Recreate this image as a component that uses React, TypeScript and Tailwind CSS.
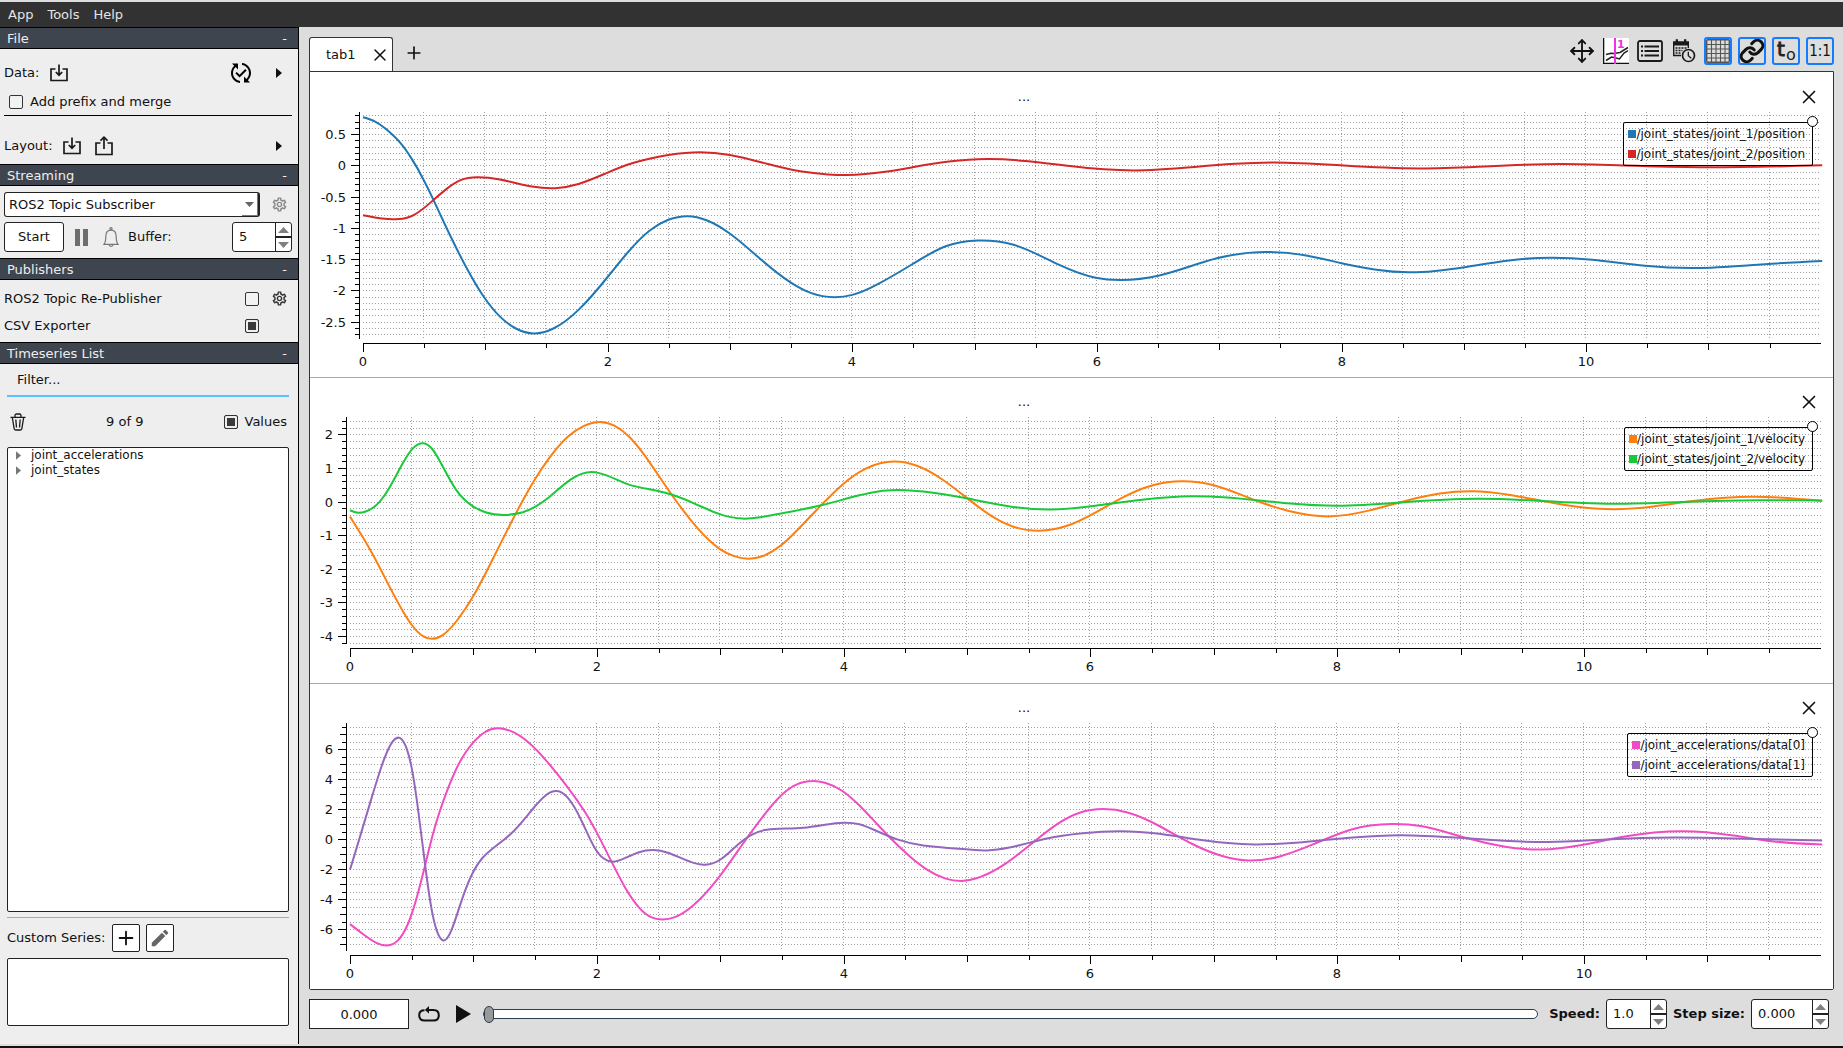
import { useEffect, useId, useRef, useState } from "react";
import type { ReactNode } from "react";
import { Link, Move, Plus, X } from "lucide-react";
import { MdEdit, MdOutlineSettings, MdPublishedWithChanges } from "react-icons/md";

type Point = [number, number];

interface Series {
  name: string;
  color: string;
  points: Point[];
}

interface PlotConfig {
  label: string;
  left: number;
  min: number;
  max: number;
  major: number;
  minor: number;
  medium?: number;
  series: Series[];
}

const END_TIME = 11.92;

const position1: Point[] = [
  [0, 0.78], [0.1, 0.71], [0.2, 0.57], [0.3, 0.38], [0.4, 0.11], [0.49, -0.2], [0.573, -0.53], [0.695, -1.04],
  [0.856, -1.665], [0.99, -2.1], [1.12, -2.41], [1.25, -2.6], [1.397, -2.68], [1.557, -2.6], [1.762, -2.303],
  [2, -1.777], [2.157, -1.4], [2.347, -1.027], [2.496, -0.862], [2.648, -0.803], [2.814, -0.872], [2.998, -1.08],
  [3.253, -1.495], [3.495, -1.862], [3.66, -2.03], [3.857, -2.1], [4.0, -2.063], [4.21, -1.89], [4.493, -1.569],
  [4.764, -1.285], [5.03, -1.193], [5.312, -1.257], [5.688, -1.578], [5.99, -1.788], [6.2, -1.825], [6.51, -1.752],
  [6.98, -1.477], [7.373, -1.376], [7.71, -1.431], [8, -1.555], [8.285, -1.66], [8.55, -1.701], [9.02, -1.614],
  [9.37, -1.51], [9.72, -1.468], [10.05, -1.5], [10.48, -1.596], [10.9, -1.633], [11.4, -1.58], [11.93, -1.518],
];

const position2: Point[] = [
  [0, -0.79], [0.155, -0.841], [0.29, -0.85], [0.418, -0.782], [0.573, -0.55], [0.681, -0.371], [0.798, -0.228],
  [0.944, -0.181], [1.119, -0.218], [1.382, -0.33], [1.572, -0.356], [1.762, -0.288], [2, -0.106], [2.2, 0.043],
  [2.496, 0.176], [2.756, 0.22], [3, 0.176], [3.31, 0.032], [3.574, -0.085], [3.8, -0.135], [3.954, -0.144],
  [4.27, -0.094], [4.493, -0.02], [4.79, 0.07], [5.1, 0.112], [5.416, 0.08], [5.78, -0.003], [6.3, -0.071],
  [6.82, -0.012], [7.13, 0.035], [7.45, 0.057], [8.02, 0.006], [8.65, -0.039], [9.17, -0.007], [9.8, 0.029],
  [10.32, 0.006], [10.94, -0.021], [11.93, 0.011],
];

const velocity1: Point[] = [
  [0, -0.43], [0.084, -0.925], [0.185, -1.558], [0.316, -2.487], [0.432, -3.27], [0.504, -3.674], [0.591, -3.99],
  [0.664, -4.07], [0.751, -3.961], [0.867, -3.526], [0.997, -2.814], [1.127, -1.914], [1.345, -0.33],
  [1.493, 0.648], [1.62, 1.34], [1.765, 1.944], [1.896, 2.27], [2.026, 2.389], [2.142, 2.28], [2.258, 1.963],
  [2.388, 1.39], [2.493, 0.83], [2.62, 0.153], [2.809, -0.747], [2.994, -1.39], [3.113, -1.607], [3.229, -1.686],
  [3.359, -1.588], [3.496, -1.28], [3.647, -0.747], [3.821, -0.084], [3.992, 0.529], [4.18, 0.998], [4.413, 1.211],
  [4.594, 1.083], [4.8, 0.675], [5.008, 0.095], [5.214, -0.45], [5.395, -0.756], [5.587, -0.85], [5.81, -0.705],
  [6.04, -0.313], [6.248, 0.112], [6.506, 0.501], [6.739, 0.62], [7, 0.501], [7.333, 0.058], [7.592, -0.248],
  [7.928, -0.424], [8.264, -0.245], [8.574, 0.058], [8.832, 0.256], [9.09, 0.325], [9.4, 0.215], [9.71, 0],
  [9.995, -0.159], [10.253, -0.211], [10.563, -0.126], [10.9, 0.04], [11.364, 0.162], [11.93, 0.036],
];

const velocity2: Point[] = [
  [0, -0.242], [0.055, -0.312], [0.127, -0.28], [0.243, 0.025], [0.316, 0.41], [0.431, 1.18], [0.504, 1.578],
  [0.582, 1.756], [0.663, 1.597], [0.75, 1.07], [0.865, 0.34], [0.996, -0.124], [1.097, -0.302], [1.256, -0.381],
  [1.4, -0.302], [1.502, -0.134], [1.618, 0.163], [1.79, 0.678], [1.92, 0.885], [2.02, 0.865], [2.255, 0.529],
  [2.486, 0.341], [2.617, 0.213], [2.805, -0.064], [2.99, -0.351], [3.18, -0.49], [3.326, -0.45], [3.494, -0.341],
  [3.818, -0.094], [4.128, 0.203], [4.28, 0.32], [4.44, 0.36], [4.646, 0.317], [5.008, 0.104], [5.37, -0.143],
  [5.68, -0.22], [6.04, -0.109], [6.455, 0.085], [6.817, 0.172], [7.075, 0.147], [7.592, -0.034], [8.005, -0.109],
  [8.52, -0.007], [9.142, 0.102], [9.66, 0.034], [10.23, -0.049], [10.85, 0.01], [11.416, 0.053], [11.93, 0.044],
];

const acceleration0: Point[] = [
  [0, -5.61], [0.113, -6.32], [0.214, -6.856], [0.301, -7.033], [0.388, -6.7], [0.46, -5.77], [0.518, -4.478],
  [0.605, -1.8], [0.692, 0.967], [0.779, 3.1], [0.88, 5.03], [0.996, 6.456], [1.097, 7.2], [1.193, 7.433],
  [1.3, 7.256], [1.445, 6.504], [1.59, 5.278], [1.764, 3.5], [1.909, 1.786], [2.025, 0.083], [2.118, -1.433],
  [2.228, -3.151], [2.344, -4.527], [2.445, -5.167], [2.532, -5.3], [2.633, -5.144], [2.778, -4.389],
  [2.993, -2.451], [3.184, -0.256], [3.358, 1.681], [3.5, 3.01], [3.617, 3.68], [3.748, 3.922], [3.849, 3.806],
  [3.99, 3.256], [4.13, 2.267], [4.284, 0.941], [4.49, -0.764], [4.672, -1.967], [4.827, -2.58], [4.956, -2.733],
  [5.11, -2.465], [5.318, -1.546], [5.525, -0.245], [5.731, 1.045], [5.912, 1.8], [6.103, 2.05], [6.3, 1.822],
  [6.558, 0.923], [6.817, -0.245], [7.075, -1.087], [7.28, -1.374], [7.54, -1.087], [7.798, -0.32], [8.108, 0.674],
  [8.444, 1.056], [8.677, 0.921], [9.039, 0.138], [9.349, -0.436], [9.66, -0.647], [9.97, -0.36], [10.33, 0.214],
  [10.8, 0.578], [11.21, 0.29], [11.52, -0.092], [11.93, -0.302],
];

const acceleration1: Point[] = [
  [0, -1.99], [0.07, -0.1], [0.171, 2.678], [0.258, 4.95], [0.33, 6.344], [0.403, 6.789], [0.46, 6.056],
  [0.498, 4.856], [0.547, 2.31], [0.611, -1.81], [0.663, -4.7], [0.707, -6.122], [0.756, -6.7], [0.823, -5.99],
  [0.895, -4.278], [0.982, -2.411], [1.07, -1.24], [1.185, -0.39], [1.33, 0.611], [1.474, 1.989], [1.59, 2.986],
  [1.677, 3.25], [1.764, 2.806], [1.88, 1.211], [1.98, -0.489], [2.053, -1.228], [2.126, -1.456], [2.228, -1.22],
  [2.343, -0.82], [2.459, -0.678], [2.575, -0.856], [2.75, -1.438], [2.878, -1.656], [3.008, -1.278],
  [3.124, -0.453], [3.254, 0.339], [3.358, 0.648], [3.473, 0.744], [3.676, 0.809], [3.85, 1.01], [4, 1.134],
  [4.128, 1.036], [4.24, 0.69], [4.44, 0.02], [4.646, -0.38], [4.904, -0.57], [5.163, -0.704], [5.344, -0.513],
  [5.628, 0.06], [5.938, 0.444], [6.248, 0.577], [6.558, 0.406], [6.868, 0.023], [7.333, -0.302], [7.695, -0.168],
  [8.1, 0.138], [8.52, 0.309], [8.987, 0.138], [9.35, -0.054], [9.71, -0.149], [10.176, 0.023], [10.74, 0.156],
  [11.21, 0.1], [11.93, -0.034],
];

const plots: PlotConfig[] = [
  {
    label: "Joint positions",
    left: 53,
    min: -2.76,
    max: 0.855,
    major: 0.5,
    minor: 0.1,
    series: [
      { name: "/joint_states/joint_1/position", color: "#1f77b4", points: position1 },
      { name: "/joint_states/joint_2/position", color: "#d62728", points: position2 },
    ],
  },
  {
    label: "Joint velocities",
    left: 40,
    min: -4.21,
    max: 2.52,
    major: 1,
    minor: 0.2,
    series: [
      { name: "/joint_states/joint_1/velocity", color: "#ff7f0e", points: velocity1 },
      { name: "/joint_states/joint_2/velocity", color: "#1ac938", points: velocity2 },
    ],
  },
  {
    label: "Joint accelerations",
    left: 40,
    min: -7.37,
    max: 7.75,
    major: 2,
    minor: 0.5,
    medium: 1,
    series: [
      { name: "/joint_accelerations/data[0]", color: "#f14cc1", points: acceleration0 },
      { name: "/joint_accelerations/data[1]", color: "#9467bd", points: acceleration1 },
    ],
  },
];

// Slopes of the natural cubic spline through the points (tridiagonal solve).
function splineSlopes(pts: Point[]): number[] {
  const n = pts.length;
  const h = pts.slice(1).map((p, i) => p[0] - pts[i][0]);
  const d = pts.slice(1).map((p, i) => (p[1] - pts[i][1]) / h[i]);
  const upper: number[] = [0.5];
  const rhs: number[] = [1.5 * d[0]];
  for (let i = 1; i < n; i++) {
    const last = i === n - 1;
    const a = last ? 1 : h[i];
    const b = last ? 2 : 2 * (h[i - 1] + h[i]);
    const c = last ? 0 : h[i - 1];
    const r = last ? 3 * d[i - 1] : 3 * (h[i] * d[i - 1] + h[i - 1] * d[i]);
    const m = b - a * upper[i - 1];
    upper.push(c / m);
    rhs.push((r - a * rhs[i - 1]) / m);
  }
  const slopes = rhs.slice();
  for (let i = n - 2; i >= 0; i--) slopes[i] = rhs[i] - upper[i] * slopes[i + 1];
  return slopes;
}

function smoothPath(pts: Point[]): string {
  const slopes = splineSlopes(pts);
  let d = `M${pts[0][0].toFixed(1)} ${pts[0][1].toFixed(1)}`;
  for (let i = 1; i < pts.length; i++) {
    const [x0, y0] = pts[i - 1];
    const [x1, y1] = pts[i];
    const h = (x1 - x0) / 3;
    const c = [x0 + h, y0 + slopes[i - 1] * h, x1 - h, y1 - slopes[i] * h, x1, y1];
    d += `C${c.map((n) => n.toFixed(1)).join(" ")}`;
  }
  return d;
}

function isMultiple(value: number, step: number): boolean {
  return Math.abs(value / step - Math.round(value / step)) < 1e-6;
}

function Plot({ config }: { config: PlotConfig }) {
  const host = useRef<HTMLDivElement>(null);
  const [size, setSize] = useState({ w: 1523, h: 305 });

  useEffect(() => {
    const el = host.current;
    if (!el) return;
    const measure = () => setSize({ w: el.clientWidth, h: el.clientHeight });
    measure();
    const observer = new ResizeObserver(measure);
    observer.observe(el);
    return () => observer.disconnect();
  }, []);

  const { left, min, max, major, minor, medium, series } = config;
  const right = size.w - 12;
  const top = 39;
  const bottom = size.h - 39;
  const axisY = size.h - 34;
  const sx = (t: number) => left + (t / END_TIME) * (right - left);
  const sy = (v: number) => top + ((max - v) / (max - min)) * (bottom - top);

  const rows: number[] = [];
  for (let k = Math.ceil(min / minor); k * minor <= max; k++) rows.push(k * minor);
  const columns: number[] = [];
  for (let t = 0; t <= END_TIME; t += 0.5) columns.push(t);

  return (
    <section
      aria-label={config.label}
      className="relative min-h-0 overflow-hidden border-b border-[#aaa] bg-white last:border-b-0"
    >
      <div ref={host} className="h-full">
        <svg width={size.w} height={size.h} className="block" role="img" aria-label={`${config.label} chart`}>
          <g stroke="#a0a0a4" strokeDasharray="1 2" shapeRendering="crispEdges">
            {rows.map((v) => (
              <line key={v} x1={left} x2={right} y1={Math.round(sy(v)) + 0.5} y2={Math.round(sy(v)) + 0.5} />
            ))}
            {columns.slice(1).map((t) => (
              <line key={t} y1={top} y2={bottom} x1={Math.round(sx(t)) - 0.5} x2={Math.round(sx(t)) - 0.5} />
            ))}
          </g>
          <g stroke="#000" shapeRendering="crispEdges">
            <line x1={left - 3.5} x2={left - 3.5} y1={top} y2={bottom + 1} />
            <line x1={left} x2={right} y1={axisY + 0.5} y2={axisY + 0.5} />
            {rows.map((v) => {
              const len = isMultiple(v, major) ? 8 : medium && isMultiple(v, medium) ? 6 : 4;
              const y = Math.round(sy(v)) + 0.5;
              return <line key={v} x1={left - 4 - len} x2={left - 4} y1={y} y2={y} />;
            })}
            {columns.map((t) => {
              const len = isMultiple(t, 2) ? 9 : isMultiple(t, 1) ? 7 : 5;
              const x = Math.round(sx(t)) + 0.5;
              return <line key={t} x1={x} x2={x} y1={axisY} y2={axisY + len} />;
            })}
          </g>
          <g fontSize="13" fill="#111">
            {rows
              .filter((v) => isMultiple(v, major))
              .map((v) => (
                <text key={v} x={left - 17} y={Math.round(sy(v)) + 5} textAnchor="end">
                  {String(Math.round(v * 10) / 10 || 0)}
                </text>
              ))}
            {columns
              .filter((t) => isMultiple(t, 2))
              .map((t) => (
                <text key={t} x={Math.round(sx(t))} y={axisY + 23} textAnchor="middle">
                  {t}
                </text>
              ))}
          </g>
          {series.map((s) => (
            <path
              key={s.name}
              d={smoothPath(s.points.map(([t, v]) => [sx(t), sy(v) + 0.5]))}
              fill="none"
              stroke={s.color}
              strokeWidth="2"
            />
          ))}
        </svg>
      </div>
      <header className="absolute inset-x-0 top-0 flex items-center pr-[13px] pt-[10px]">
        <h2 className="flex-1 pr-[60px] text-center text-[13px] leading-7">...</h2>
        <button type="button" aria-label={`Close ${config.label}`} className="flex size-[22px] items-center justify-center">
          <X className="size-[22px] shrink-0" strokeWidth={1.8} />
        </button>
      </header>
      <ul className="absolute right-5 top-[49px] rounded-[2px] border border-black py-px pl-1 pr-[7px] text-xs leading-5">
        {series.map((s) => (
          <li key={s.name} className="flex items-center">
            <svg viewBox="0 0 8 8" className="size-2" aria-hidden="true">
              <rect width="8" height="8" fill={s.color} />
            </svg>
            <span>{s.name}</span>
          </li>
        ))}
        <li aria-hidden="true" className="absolute -right-[6px] -top-[7px] size-[11px] rounded-full border border-black bg-white" />
      </ul>
    </section>
  );
}

function SectionHeader({ title }: { title: string }) {
  return (
    <h2 className="border-y border-black bg-[#3e454f] text-[13px] leading-5 text-[#eee]">
      <button type="button" className="flex h-5 w-full items-center justify-between pl-[7px] pr-[11px] pt-px">
        <span>{title}</span>
        <span>-</span>
      </button>
    </h2>
  );
}

function CheckBox({ id, checked = false }: { id: string; checked?: boolean }) {
  return (
    <input
      id={id}
      type="checkbox"
      defaultChecked={checked}
      className="size-[14px] shrink-0 appearance-none rounded-[2px] border border-[#333] bg-[#f2f2f2] checked:bg-[#3a3a3a] checked:shadow-[inset_0_0_0_2px_#eee]"
    />
  );
}

function Triangle({ direction, className }: { direction: "up" | "down" | "right"; className: string }) {
  const shape = { up: "M0 6L5.500 0L11 6Z", down: "M0 0H11L5.500 6Z", right: "M0 0L6 5L0 10Z" }[direction];
  return (
    <svg viewBox={direction === "right" ? "0 0 6 10" : "0 0 11 6"} className={className} fill="currentColor" aria-hidden="true">
      <path d={shape} />
    </svg>
  );
}

function SpinBox({ id, value, width }: { id: string; value: string; width: string }) {
  return (
    <div className={`${width} flex h-[30px] shrink-0 overflow-hidden rounded-[3px] border border-[#222] bg-white`}>
      <input id={id} defaultValue={value} inputMode="decimal" className="w-0 min-w-0 flex-1 pl-[6px] text-[13px] outline-none" />
      <div className="flex w-4 flex-col divide-y-2 divide-[#222] border-l border-[#222] text-[#808080]">
        <button type="button" aria-label="Increase" className="flex flex-1 items-center justify-center">
          <Triangle direction="up" className="h-[6px] w-[11px] shrink-0" />
        </button>
        <button type="button" aria-label="Decrease" className="flex flex-1 items-center justify-center">
          <Triangle direction="down" className="h-[6px] w-[11px] shrink-0" />
        </button>
      </div>
    </div>
  );
}

function ImportIcon() {
  return (
    <svg viewBox="0 0 18 18" className="size-[18px]" fill="none" stroke="#1a1a1a" strokeWidth="1.7" aria-hidden="true">
      <path d="M5.500 5H1v11.500h16V5h-4.500" />
      <path d="M9 0.500v10.500M5.800 8L9 11.200L12.200 8" />
    </svg>
  );
}

function ExportIcon() {
  return (
    <svg viewBox="0 0 18 20" className="h-5 w-[18px]" fill="none" stroke="#1a1a1a" strokeWidth="1.7" aria-hidden="true">
      <path d="M5.500 7H1v11.500h16V7h-4.500" />
      <path d="M9 13V1.500M5.500 4.700L9 1.200L12.500 4.700" />
    </svg>
  );
}

function BellIcon() {
  return (
    <svg viewBox="0 0 16 20" className="h-5 w-4" fill="none" stroke="#777" strokeWidth="1.2" aria-hidden="true">
      <circle cx="8" cy="1.700" r="1.100" />
      <path d="M1 17.300C2.500 15.500 2.800 14 2.800 9.500C2.800 5.500 5 3.200 8 3.200S13.200 5.500 13.200 9.500C13.200 14 13.500 15.500 15 17.300Z" />
      <path d="M6 17.500C6.200 19.900 9.800 19.900 10 17.500" />
    </svg>
  );
}

function TrashIcon() {
  return (
    <svg viewBox="0 0 16 18" className="h-[18px] w-4" fill="none" stroke="#1a1a1a" strokeWidth="1.3" aria-hidden="true">
      <path d="M0.500 4.300H15.500M5 4V2.600C5 1.500 5.600 1 6.500 1H9.500C10.400 1 11 1.500 11 2.600V4" />
      <path d="M2.300 4.500L4.200 15.800C4.300 16.700 4.900 17 5.600 17H10.400C11.100 17 11.700 16.700 11.800 15.800L13.700 4.500" />
      <path d="M5.800 6.500L6.500 14.500M10.200 6.500L9.500 14.500" />
    </svg>
  );
}

function LoopIcon() {
  return (
    <svg viewBox="0 0 22 18" className="h-[18px] w-[22px]" fill="none" stroke="#111" strokeWidth="2" aria-hidden="true">
      <path d="M6.500 5.200C3 5.200 1.200 6.800 1.200 10S3 15.500 6.500 15.500H15.500C19 15.500 20.800 13.500 20.800 10.300S19 5 15.500 5H9.500" />
      <path d="M11 1L6.800 5L11 8.500Z" fill="#111" stroke="none" />
    </svg>
  );
}

function TrackerIcon() {
  return (
    <svg viewBox="0 0 26 26" className="size-[26px]" fill="none" aria-hidden="true">
      <rect width="26" height="26" fill="#fff" />
      <path d="M0.600 0V25.400H26" stroke="#111" strokeWidth="1.400" />
      <path d="M3 16.500L8 15.200L11 15.500L17 14.500L25 9.500M3 22.500L8.500 19L12 19.800L16.500 21L21 15L25 12.700" stroke="#222" strokeWidth="1.500" />
      <path d="M12 0V26" stroke="#f032e6" strokeWidth="2" />
      <text x="14" y="10" fontSize="11" fontWeight="bold" fill="#f032e6">
        1
      </text>
    </svg>
  );
}

function ListIcon() {
  return (
    <svg viewBox="0 0 26 22" className="h-[22px] w-[26px]" fill="none" stroke="#1a1a1a" strokeWidth="1.800" aria-hidden="true">
      <rect x="1" y="1" width="24" height="20" rx="2" />
      <path d="M7.500 6.500H22M7.500 11H22M7.500 15.500H22" />
      <path d="M4 6.500H6M4 11H6M4 15.500H6" />
    </svg>
  );
}

function CalendarClockIcon() {
  return (
    <svg viewBox="0 0 24 24" className="size-6" fill="none" stroke="#1a1a1a" aria-hidden="true">
      <path d="M1.700 3V16.500H9M16.300 3V9" strokeWidth="1.400" />
      <path d="M1 2.200H17V6.500H1ZM3.700 0.300H6V3H3.700ZM12 0.300H14.300V3H12Z" fill="#1a1a1a" stroke="none" />
      <path d="M3.500 9H15M3.500 11.500H10.500M3.500 14H9" strokeWidth="1.700" strokeDasharray="2 1" />
      <circle cx="16.500" cy="16.500" r="6" strokeWidth="1.700" fill="#ddd" />
      <path d="M16.300 12.700V16.800L19.300 19.300" strokeWidth="1.300" />
    </svg>
  );
}

function GridIcon() {
  return (
    <svg viewBox="0 0 24 24" className="size-6" fill="none" stroke="#555" aria-hidden="true">
      <rect x="0.700" y="0.700" width="22.600" height="22.600" rx="1" strokeWidth="1.400" />
      <path d="M5.500 1V23M10 1V23M14.500 1V23M19 1V23M1 5.500H23M1 10H23M1 14.500H23M1 19H23" strokeWidth="1.100" />
    </svg>
  );
}

function ToolButton({ label, active = false, children }: { label: string; active?: boolean; children: ReactNode }) {
  return (
    <button
      type="button"
      aria-label={label}
      aria-pressed={active}
      className={
        active
          ? "flex size-7 items-center justify-center rounded-[3px] border-2 border-[#147cff]"
          : "flex size-7 items-center justify-center"
      }
    >
      {children}
    </button>
  );
}

function Sidebar() {
  const uid = useId();
  return (
    <aside className="flex w-[299px] shrink-0 flex-col border-r border-black bg-[#eee]">
      <SectionHeader title="File" />
      <div className="flex flex-col pb-1 pl-1 pr-[6px] pt-[10px]">
        <div className="flex h-7 items-center">
          <span>Data:</span>
          <button type="button" aria-label="Import data" className="ml-[11px]">
            <ImportIcon />
          </button>
          <button type="button" aria-label="Reload data" className="ml-auto text-black">
            <MdPublishedWithChanges className="size-6" />
          </button>
          <button type="button" aria-label="Recent data" className="ml-[23px] mr-[10px]">
            <Triangle direction="right" className="h-[10px] w-[6px]" />
          </button>
        </div>
        <label htmlFor={`${uid}prefix`} className="flex h-[29px] items-center gap-[7px] border-b border-black pl-[5px] pt-[2px]">
          <CheckBox id={`${uid}prefix`} />
          Add prefix and merge
        </label>
        <div className="mt-4 flex h-7 items-center">
          <span>Layout:</span>
          <button type="button" aria-label="Load layout" className="ml-[10px]">
            <ImportIcon />
          </button>
          <button type="button" aria-label="Save layout" className="ml-[14px]">
            <ExportIcon />
          </button>
          <button type="button" aria-label="Recent layouts" className="ml-auto mr-[10px]">
            <Triangle direction="right" className="h-[10px] w-[6px]" />
          </button>
        </div>
      </div>

      <SectionHeader title="Streaming" />
      <div className="flex flex-col gap-[5px] py-[6px] pl-1 pr-[6px]">
        <div className="flex items-center">
          <div className="relative flex-1">
            <select
              aria-label="Streaming source"
              className="block h-[25px] w-full appearance-none rounded-[3px] border border-r-2 border-[#222] bg-white pl-1 text-[13px]"
            >
              <option>ROS2 Topic Subscriber</option>
            </select>
            <span className="pointer-events-none absolute bottom-px right-[2px] top-px flex w-4 items-center justify-center border-b border-r border-[#777] text-[#666]">
              <Triangle direction="down" className="h-[5px] w-[9px]" />
            </span>
          </div>
          <button type="button" aria-label="Streaming settings" className="ml-[11px] mr-1 text-[#888]">
            <MdOutlineSettings className="size-[17px]" />
          </button>
        </div>
        <div className="flex items-center">
          <button type="button" className="h-[30px] w-[60px] rounded-[3px] border border-[#222] bg-white">
            Start
          </button>
          <button type="button" aria-label="Pause" className="ml-[11px] flex gap-[3px]">
            <span className="h-[17px] w-[5px] bg-[#6e6e6e]" />
            <span className="h-[17px] w-[5px] bg-[#6e6e6e]" />
          </button>
          <button type="button" aria-label="Notifications" className="ml-[15px]">
            <BellIcon />
          </button>
          <label htmlFor={`${uid}buffer`} className="ml-[9px] mr-auto">
            Buffer:
          </label>
          <SpinBox id={`${uid}buffer`} value="5" width="w-[60px]" />
        </div>
      </div>

      <SectionHeader title="Publishers" />
      <div className="flex flex-col pb-[3px] pl-1 pr-[6px] pt-[5px]">
        <div className="flex h-[27px] items-center">
          <label htmlFor={`${uid}ros`} className="flex-1">
            ROS2 Topic Re-Publisher
          </label>
          <CheckBox id={`${uid}ros`} />
          <button type="button" aria-label="Publisher settings" className="ml-3 mr-1 text-[#333]">
            <MdOutlineSettings className="size-[17px]" />
          </button>
        </div>
        <div className="flex h-[27px] items-center pr-[33px]">
          <label htmlFor={`${uid}csv`} className="flex-1">
            CSV Exporter
          </label>
          <CheckBox id={`${uid}csv`} checked />
        </div>
      </div>

      <SectionHeader title="Timeseries List" />
      <div className="flex min-h-0 flex-1 flex-col pb-[18px] pl-[7px] pr-[9px]">
        <input
          aria-label="Filter"
          placeholder="Filter..."
          className="h-[33px] border-b-2 border-[#5cc0ff] bg-transparent pl-[10px] text-[13px] outline-none placeholder:text-[#111] placeholder:opacity-100"
        />
        <div className="flex h-[50px] items-center pl-[3px]">
          <button type="button" aria-label="Clear series">
            <TrashIcon />
          </button>
          <span className="flex-1 text-center">9 of 9</span>
          <CheckBox id={`${uid}values`} checked />
          <label htmlFor={`${uid}values`} className="ml-[7px] mr-[2px]">
            Values
          </label>
        </div>
        <ul className="min-h-0 flex-1 rounded-[2px] border border-[#222] bg-white text-xs leading-[15px]">
          {["joint_accelerations", "joint_states"].map((name) => (
            <li key={name} className="flex items-center gap-[10px] pl-2">
              <Triangle direction="right" className="h-[9px] w-[5px] text-[#777]" />
              {name}
            </li>
          ))}
        </ul>
        <div className="mt-[5px] flex items-center gap-[6px] border-t border-[#aaa] py-[6px]">
          <span className="mr-px">Custom Series:</span>
          <button
            type="button"
            aria-label="Add custom series"
            className="flex size-7 items-center justify-center rounded-[2px] border border-[#222] bg-white"
          >
            <Plus className="size-[22px]" strokeWidth={2} />
          </button>
          <button
            type="button"
            aria-label="Edit custom series"
            className="flex size-7 items-center justify-center rounded-[2px] border border-[#222] bg-white text-[#666]"
          >
            <MdEdit className="size-[22px]" />
          </button>
        </div>
        <div className="h-[68px] rounded-[2px] border border-[#222] bg-white" />
      </div>
    </aside>
  );
}

function PlaybackBar() {
  const uid = useId();
  return (
    <footer className="flex items-center pb-[15px] pr-[5px] pt-[9px]">
      <input aria-label="Current time" defaultValue="0.000" className="h-[30px] w-[100px] border border-[#222] bg-white text-center text-[13px]" />
      <button type="button" aria-label="Loop" className="ml-[9px]">
        <LoopIcon />
      </button>
      <button type="button" aria-label="Play" className="ml-4">
        <svg viewBox="0 0 15 18" className="h-[18px] w-[15px]" aria-hidden="true">
          <path d="M0 0L15 9L0 18Z" fill="#111" />
        </svg>
      </button>
      <input
        type="range"
        aria-label="Playback position"
        defaultValue={0}
        className="ml-3 mr-[11px] h-[10px] min-w-0 flex-1 appearance-none rounded-[5px] border border-[#2c3e50] bg-white [&::-webkit-slider-thumb]:h-[17px] [&::-webkit-slider-thumb]:w-[10px] [&::-webkit-slider-thumb]:appearance-none [&::-webkit-slider-thumb]:rounded-[5px] [&::-webkit-slider-thumb]:border [&::-webkit-slider-thumb]:border-[#2c3e50] [&::-webkit-slider-thumb]:bg-[#999]"
      />
      <label htmlFor={`${uid}speed`} className="mr-[6px] font-bold">
        Speed:
      </label>
      <SpinBox id={`${uid}speed`} value="1.0" width="w-[61px]" />
      <label htmlFor={`${uid}step`} className="mx-[6px] font-bold">
        Step size:
      </label>
      <SpinBox id={`${uid}step`} value="0.000" width="w-[78px]" />
    </footer>
  );
}

export default function App() {
  return (
    <div className="flex h-screen flex-col border-b-2 border-[#111] bg-[#ddd] font-['DejaVu_Sans','Noto_Sans',sans-serif] text-[13px] leading-5 text-[#111]">
      <nav className="mt-[2px] flex h-[25px] shrink-0 items-center gap-[14px] bg-[#323232] px-2 text-[#e4e4e4]">
        <button type="button">App</button>
        <button type="button">Tools</button>
        <button type="button">Help</button>
      </nav>
      <div className="flex min-h-0 flex-1 pb-[2px]">
        <Sidebar />
        <main className="flex min-w-0 flex-1 flex-col pl-[10px] pr-[9px]">
          <div className="flex items-end pt-[10px]">
            <div className="-mb-px flex h-[35px] w-[84px] items-center justify-between rounded-t-[3px] border border-b-0 border-[#333] bg-white pl-4 pr-[2px]">
              <span>tab1</span>
              <button type="button" aria-label="Close tab1">
                <X className="size-5" strokeWidth={1.8} />
              </button>
            </div>
            <button type="button" aria-label="Add tab" className="mb-2 ml-[11px]">
              <Plus className="size-5" strokeWidth={2} />
            </button>
            <div className="mb-[6px] ml-auto flex gap-[6px]">
              <ToolButton label="Move">
                <Move className="size-[26px]" strokeWidth={1.7} />
              </ToolButton>
              <ToolButton label="Time tracker">
                <TrackerIcon />
              </ToolButton>
              <ToolButton label="Legend">
                <ListIcon />
              </ToolButton>
              <ToolButton label="Date and time">
                <CalendarClockIcon />
              </ToolButton>
              <ToolButton label="Grid" active>
                <GridIcon />
              </ToolButton>
              <ToolButton label="Link axes" active>
                <Link className="size-[26px] shrink-0" strokeWidth={2.8} />
              </ToolButton>
              <ToolButton label="Remove time offset" active>
                <svg viewBox="0 0 24 24" className="size-6 shrink-0 overflow-visible" fill="#222" aria-hidden="true">
                  <text x="3" y="17" fontSize="20" stroke="#222" strokeWidth="0.900">
                    t
                  </text>
                  <text x="12" y="21" fontSize="16">
                    o
                  </text>
                </svg>
              </ToolButton>
              <ToolButton label="Keep ratio" active>
                <span className="font-['DejaVu_Sans_Condensed','DejaVu_Sans',sans-serif] text-[15px]">1:1</span>
              </ToolButton>
            </div>
          </div>
          <div className="grid min-h-0 flex-1 grid-rows-3 rounded-b-[2px] border border-[#333] bg-white pt-px">
            {plots.map((config) => (
              <Plot key={config.label} config={config} />
            ))}
          </div>
          <PlaybackBar />
        </main>
      </div>
    </div>
  );
}
